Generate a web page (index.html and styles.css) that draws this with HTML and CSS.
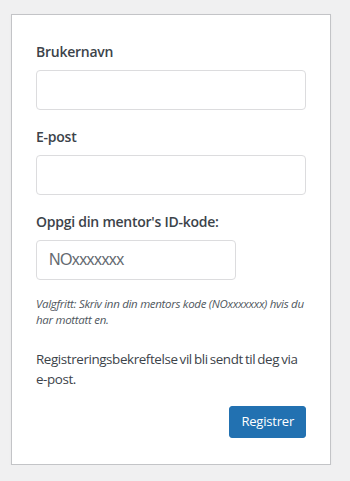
FILE: index.html
```html
<!DOCTYPE html>
<html lang="nb">
<head>
    <meta charset="UTF-8">
    <meta name="viewport" content="width=device-width, initial-scale=1.0">
    <title>Registrer</title>
    <link rel="stylesheet" href="styles.css">
</head>
<body>
    <form class="register-form">
        <div class="field">
            <label for="user_login">Brukernavn</label>
            <input type="text" id="user_login" class="input">
        </div>
        <div class="field">
            <label for="user_email">E-post</label>
            <input type="email" id="user_email" class="input">
        </div>
        <div class="field">
            <label for="mentor_code">Oppgi din mentor's ID-kode:</label>
            <input type="text" id="mentor_code" class="input input-short" placeholder="NOxxxxxxx">
        </div>
        <p class="description">Valgfritt: Skriv inn din mentors kode (NOxxxxxxx) hvis du har mottatt en.</p>
        <p class="reg-notice">Registreringsbekreftelse vil bli sendt til deg via e-post.</p>
        <div class="submit">
            <button type="submit" class="button-primary">Registrer</button>
        </div>
    </form>
</body>
</html>
```

FILE: styles.css
```css
* {
    margin: 0;
    padding: 0;
    box-sizing: border-box;
}

body {
    background: #f0f0f1;
    color: #3c434a;
    font-family: "Open Sans", "Noto Sans", sans-serif;
    font-size: 14px;
    line-height: 1.5;
    padding: 14px 0 0 11px;
}

.register-form {
    inline-size: 320px;
    background: #fff;
    border: 1px solid #c3c4c7;
    box-shadow: 0 1px 3px rgba(0, 0, 0, 0.04);
    padding: 26px 24px 26px;
}

.field label {
    display: block;
    font-weight: 600;
    font-size: 14px;
    line-height: 21px;
    margin-block-end: 8px;
    color: #3c434a;
    letter-spacing: -0.25px;
}

.input {
    display: block;
    inline-size: 100%;
    block-size: 40px;
    border: 1px solid #dcdcde;
    border-radius: 4px;
    background: #fff;
    padding: 0 12px;
    font-size: 16px;
    color: #2c3338;
    margin-block-end: 16px;
    font-family: "Liberation Sans", Arial, sans-serif;
}

.input-short {
    inline-size: 200px;
}

.input::placeholder {
    color: #646970;
    letter-spacing: -0.6px;
}

.description {
    font-size: 11.5px;
    font-style: italic;
    line-height: 16px;
    color: #50575e;
    margin-block-start: 8px;
    letter-spacing: -0.3px;
}

.reg-notice {
    margin-block-start: 22px;
    font-size: 13.4px;
    line-height: 19.5px;
    color: #3c434a;
    letter-spacing: -0.4px;
    word-spacing: -1px;
}

.submit {
    display: flex;
    justify-content: flex-end;
    margin-block-start: 17px;
}

.button-primary {
    background: #2271b1;
    color: #fff;
    border: 1px solid #2271b1;
    border-radius: 3px;
    font-family: "Open Sans", "Noto Sans", sans-serif;
    font-size: 13px;
    line-height: 2.3;
    min-block-size: 32px;
    padding: 0 11px;
    cursor: pointer;
    letter-spacing: -0.2px;
}
```
